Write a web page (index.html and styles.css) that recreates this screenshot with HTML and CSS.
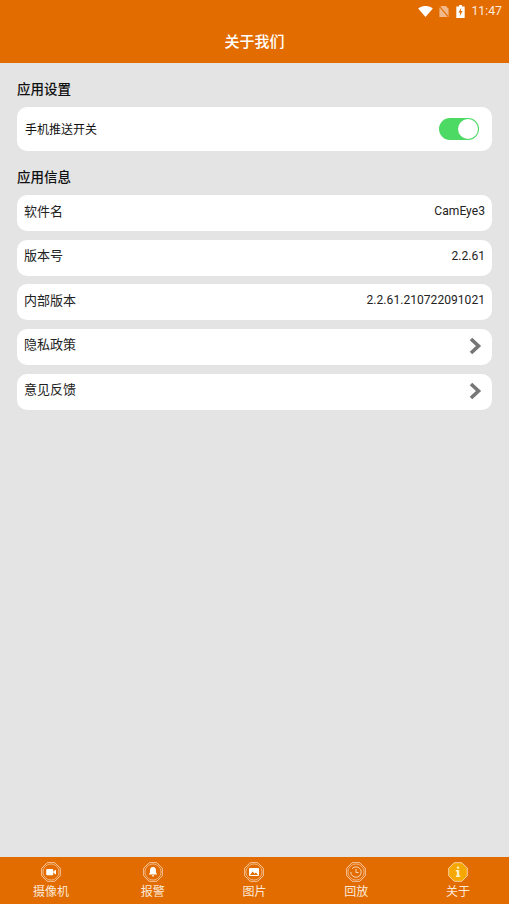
FILE: index.html
```html
<!DOCTYPE html>
<html lang="zh-CN">
<head>
<meta charset="utf-8">
<title>关于我们</title>
<link rel="stylesheet" href="styles.css">
</head>
<body>
<div class="app">
  <header class="header">
    <div class="status">
      <svg class="st-wifi" viewBox="0 0 16 12"><path d="M0 2.6 C4.5-.9 11.5-.9 16 2.6 L8 12Z" fill="#fff"/></svg>
      <svg class="st-sim" viewBox="0 0 10 12"><path d="M2 0H7L10 3V12H0V2Z" fill="#f0b98c"/><path d="M0.5 1 9.5 11.5" stroke="#e36c00" stroke-width="1.2"/></svg>
      <svg class="st-bat" viewBox="0 0 9 14"><path d="M3 0H6V1.500H9V14H0V1.500H3Z" fill="#fff"/><path d="M5.300 3 2.300 8H4.200L3.700 12 6.700 6.500H4.800Z" fill="#e36c00"/></svg>
      <span class="time">11:47</span>
    </div>
    <h1 class="title">关于我们</h1>
  </header>

  <main class="content">
    <h2 class="section">应用设置</h2>
    <div class="card card-switch">
      <span class="switch-label">手机推送开关</span>
      <span class="toggle"><span class="knob"></span></span>
    </div>

    <h2 class="section">应用信息</h2>
    <div class="list">
      <div class="card row"><span>软件名</span><span class="value">CamEye3</span></div>
      <div class="card row"><span>版本号</span><span class="value">2.2.61</span></div>
      <div class="card row"><span>内部版本</span><span class="value">2.2.61.210722091021</span></div>
      <div class="card row"><span>隐私政策</span>
        <svg class="chev" viewBox="0 0 14 18"><path d="M3 2 10.500 9 3 16" fill="none" stroke="#767676" stroke-width="3.600"/></svg>
      </div>
      <div class="card row"><span>意见反馈</span>
        <svg class="chev" viewBox="0 0 14 18"><path d="M3 2 10.500 9 3 16" fill="none" stroke="#767676" stroke-width="3.600"/></svg>
      </div>
    </div>
  </main>

  <nav class="tabs">
    <div class="tab">
      <svg class="tab-icon" viewBox="0 0 20 20"><path class="oct" d="M6.200.7H13.800L19.300 6.200V13.800L13.800 19.300H6.200L.7 13.800V6.200Z"/><circle class="ring" cx="10" cy="10" r="8"/><rect class="glyph" x="5.200" y="7" width="7" height="6.200" rx="1"/><path class="glyph" d="M12.500 9.300 15 7.700V12.500L12.500 11Z"/></svg>
      <span>摄像机</span>
    </div>
    <div class="tab">
      <svg class="tab-icon" viewBox="0 0 20 20"><path class="oct" d="M6.200.7H13.800L19.300 6.200V13.800L13.800 19.300H6.200L.7 13.800V6.200Z"/><circle class="ring" cx="10" cy="10" r="8"/><path class="glyph" d="M10 5C7.800 5 7 6.800 7 8.500V10.500L5.800 12.500H14.200L13 10.500V8.500C13 6.800 12.200 5 10 5Z"/><path class="glyph" d="M8.700 13.300H11.300L10 15Z"/></svg>
      <span>报警</span>
    </div>
    <div class="tab">
      <svg class="tab-icon" viewBox="0 0 20 20"><path class="oct" d="M6.200.7H13.800L19.300 6.200V13.800L13.800 19.300H6.200L.7 13.800V6.200Z"/><circle class="ring" cx="10" cy="10" r="8"/><rect class="glyph" x="5" y="6" width="10" height="8" rx="1"/><path class="cut" d="M6 13 8.600 9.500 10.500 11.800 12 10.500 14 13Z"/></svg>
      <span>图片</span>
    </div>
    <div class="tab">
      <svg class="tab-icon" viewBox="0 0 20 20"><path class="oct" d="M6.200.7H13.800L19.300 6.200V13.800L13.800 19.300H6.200L.7 13.800V6.200Z"/><circle class="ring" cx="10" cy="10" r="8"/><path class="hand" d="M6.200 6.500A5.200 5.200 0 1 1 4.800 10M10 7V10.500H12.500"/></svg>
      <span>回放</span>
    </div>
    <div class="tab">
      <svg class="tab-icon" viewBox="0 0 20 20"><path class="oct-on" d="M6.200.7H13.800L19.300 6.200V13.800L13.800 19.300H6.200L.7 13.800V6.200Z"/><rect class="glyph-on" x="8.800" y="4.500" width="2.400" height="2.200" rx=".6"/><path class="glyph-on" d="M7.800 8H11.200V13.500H12.200V15H7.800V13.500H8.800V9.500H7.800Z"/></svg>
      <span>关于</span>
    </div>
  </nav>
</div>
</body>
</html>
```

FILE: styles.css
```css
* { box-sizing: border-box; }
html, body { margin: 0; padding: 0; }
body {
  width: 509px;
  height: 904px;
  overflow: hidden;
  font-family: Roboto, "Noto Sans CJK SC", sans-serif;
  background: #e4e4e4;
  color: #111;
}
.app { display: flex; flex-direction: column; height: 904px; }

.header {
  height: 63px;
  flex: none;
  background: #e36c00;
  color: #fff;
  padding-top: 1px;
}
.status {
  height: 20px;
  display: flex;
  align-items: center;
  justify-content: flex-end;
  padding-right: 7px;
}
.st-wifi { width: 15px; height: 11px; margin-right: 6px; }
.st-sim { width: 10px; height: 11px; margin-right: 7px; }
.st-bat { width: 9px; height: 13px; margin-right: 6px; }
.time { font-size: 12.300px; line-height: 20px; color: #fbe9da; }
.title {
  margin: 0;
  font-size: 15px;
  font-weight: 500;
  line-height: 20px;
  text-align: center;
  padding-top: 11px;
}

.content { flex: 1; padding: 0 17px; }
.section {
  margin: 0;
  font-size: 13.500px;
  font-weight: 500;
  line-height: 20px;
  padding-top: 16px;
  height: 44px;
  color: #111;
}
.card { background: #fff; border-radius: 10px; }
.card-switch {
  height: 44px;
  display: flex;
  align-items: center;
  justify-content: space-between;
  padding: 0 13px 0 8px;
}
.switch-label { font-size: 12px; position: relative; top: -1px; }
.toggle {
  width: 40px;
  height: 22px;
  border-radius: 11px;
  background: #4cd964;
  display: flex;
  justify-content: flex-end;
  align-items: center;
  padding: 1px;
}
.knob {
  width: 20px;
  height: 20px;
  border-radius: 50%;
  background: #fff;
}
.list { display: flex; flex-direction: column; gap: 8.450px; }
.row {
  height: 36.200px;
  display: flex;
  align-items: center;
  justify-content: space-between;
  padding: 0 7px;
  font-size: 13px;
  color: #222;
}
.row > span:first-child { position: relative; top: -3px; }
.value { font-size: 12.050px; letter-spacing: .03px; color: #222; position: relative; top: -2px; }
.chev { width: 14px; height: 18px; margin-right: 3px; position: relative; top: -1px; }

.tabs {
  flex: none;
  height: 47px;
  background: #e36c00;
  display: grid;
  grid-template-columns: repeat(5, 1fr);
  color: #fbe9da;
}
.tab {
  display: flex;
  flex-direction: column;
  align-items: center;
  font-size: 12px;
  line-height: 14px;
  padding-top: 5px;
}
.tab-icon { width: 20px; height: 20px; margin-bottom: 3px; }
.oct { fill: none; stroke: #fbe3cf; stroke-width: .8; }
.oct-on { fill: #f6a800; stroke: #fbe3cf; stroke-width: .8; }
.ring { fill: none; stroke: #f6c9a3; stroke-width: .7; }
.hand { fill: none; stroke: #fbe3cf; stroke-width: .9; }
.glyph { fill: #fff; }
.glyph-on { fill: #fdf0c0; }
.cut { fill: #e36c00; }
```
